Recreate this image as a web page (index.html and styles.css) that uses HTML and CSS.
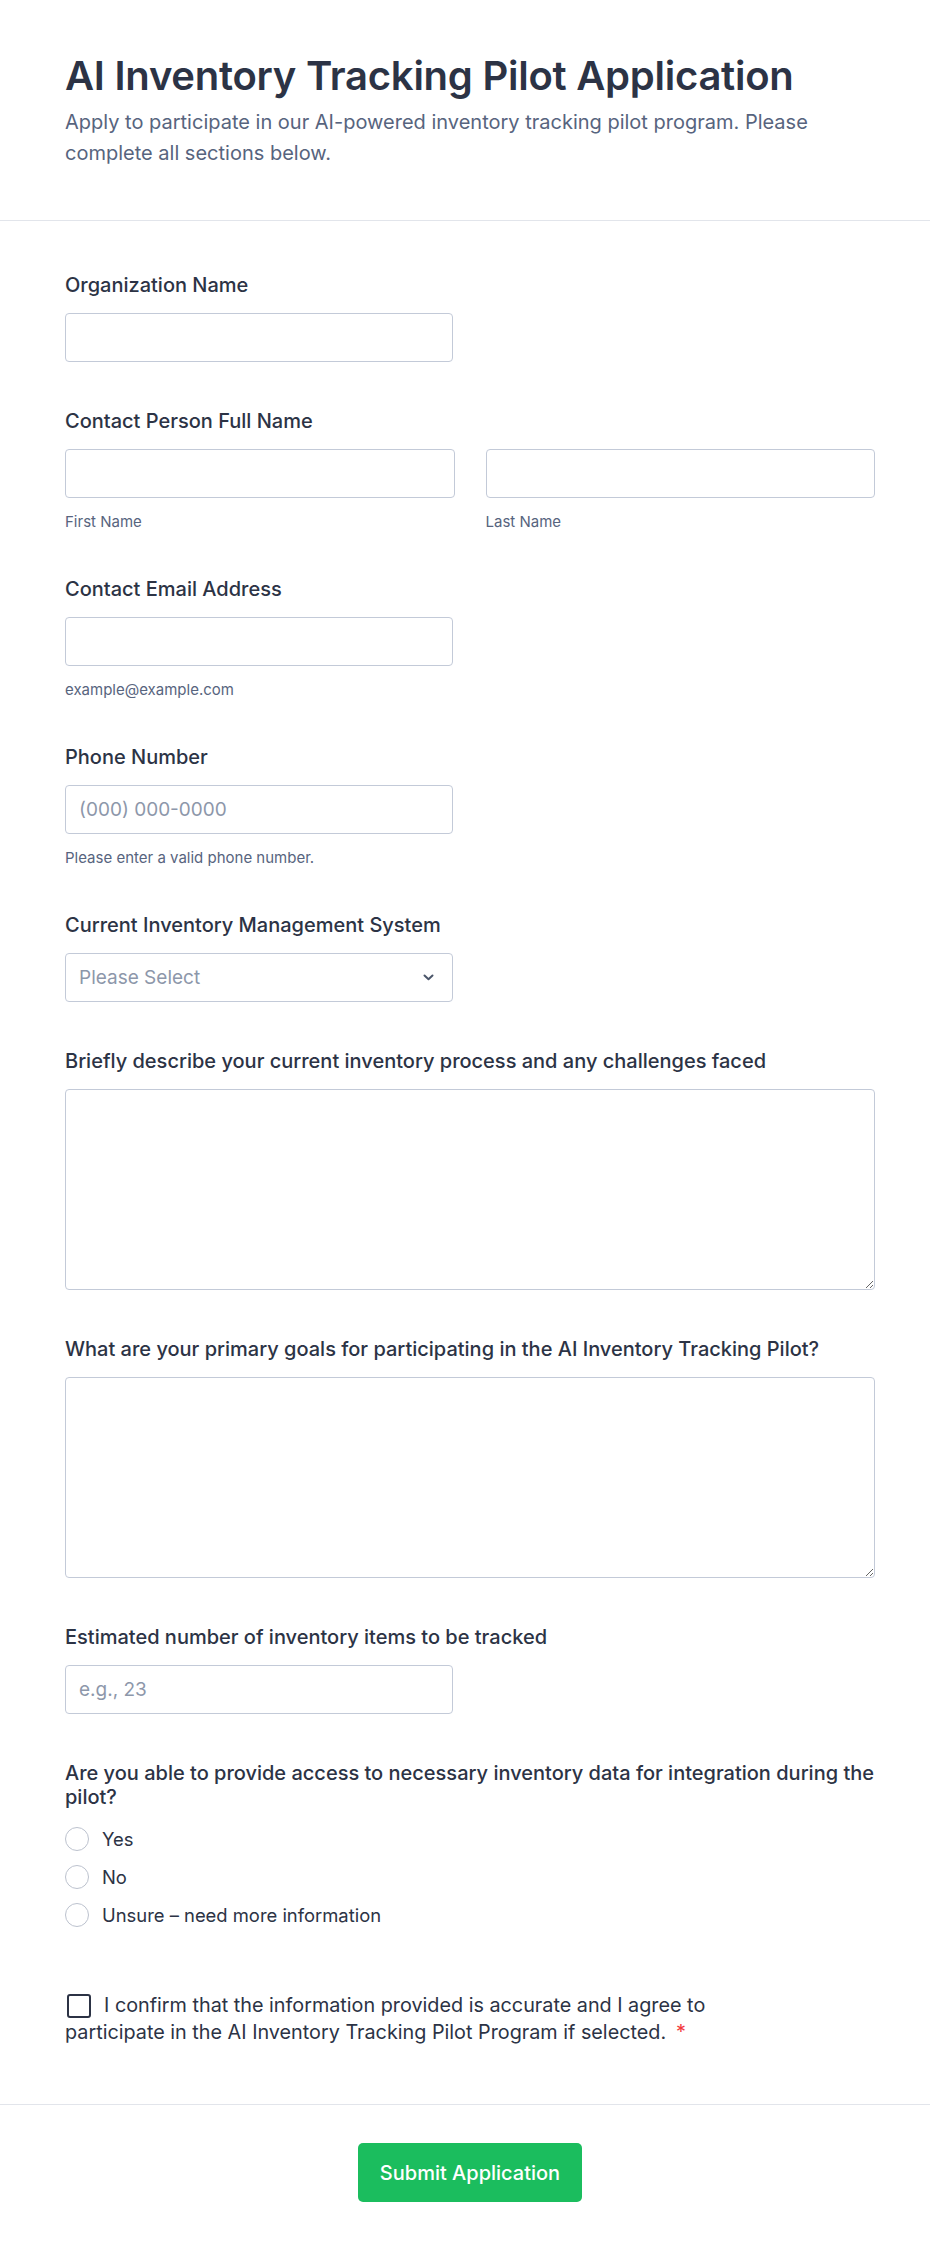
FILE: index.html
```html
<!DOCTYPE html>
<html lang="en">
<head>
<meta charset="utf-8">
<title>AI Inventory Tracking Pilot Application</title>
<link rel="stylesheet" href="styles.css">
</head>
<body>
<header class="form-header">
  <h1 class="title">AI Inventory Tracking Pilot Application</h1>
  <p class="subtitle">Apply to participate in our AI-powered inventory tracking pilot program. Please complete all sections below.</p>
</header>
<main class="form-body">
  <div class="field">
    <label class="label" for="org">Organization Name</label>
    <input class="input half" id="org" type="text">
  </div>
  <div class="field">
    <label class="label" for="first">Contact Person Full Name</label>
    <div class="name-row">
      <div class="name-col">
        <input class="input" id="first" type="text">
        <span class="sublabel">First Name</span>
      </div>
      <div class="name-col">
        <input class="input" id="last" type="text">
        <span class="sublabel">Last Name</span>
      </div>
    </div>
  </div>
  <div class="field">
    <label class="label" for="email">Contact Email Address</label>
    <input class="input half" id="email" type="email">
    <span class="sublabel">example@example.com</span>
  </div>
  <div class="field">
    <label class="label" for="phone">Phone Number</label>
    <input class="input half" id="phone" type="tel" placeholder="(000) 000-0000">
    <span class="sublabel">Please enter a valid phone number.</span>
  </div>
  <div class="field">
    <label class="label" for="system">Current Inventory Management System</label>
    <div class="select-wrap half">
      <select class="input select" id="system">
        <option value="">Please Select</option>
      </select>
      <svg class="chevron" width="11" height="7" viewBox="0 0 11 7" aria-hidden="true"><path d="M1.5 1.5 L5.5 5.2 L9.5 1.5" fill="none" stroke="#4a5569" stroke-width="2" stroke-linecap="round" stroke-linejoin="round"/></svg>
    </div>
  </div>
  <div class="field">
    <label class="label" for="process">Briefly describe your current inventory process and any challenges faced</label>
    <textarea class="input textarea" id="process"></textarea>
  </div>
  <div class="field">
    <label class="label" for="goals">What are your primary goals for participating in the AI Inventory Tracking Pilot?</label>
    <textarea class="input textarea" id="goals"></textarea>
  </div>
  <div class="field">
    <label class="label" for="items">Estimated number of inventory items to be tracked</label>
    <input class="input half" id="items" type="number" placeholder="e.g., 23">
  </div>
  <div class="field">
    <span class="label label-radio">Are you able to provide access to necessary inventory data for integration during the pilot?</span>
    <div class="options">
      <label class="option"><span class="radio"></span>Yes</label>
      <label class="option"><span class="radio"></span>No</label>
      <label class="option"><span class="radio"></span>Unsure – need more information</label>
    </div>
  </div>
  <div class="consent">
    <label class="consent-label"><span class="checkbox"></span><span>I confirm that the information provided is accurate and I agree to</span><br><span>participate in the AI Inventory Tracking Pilot Program if selected.</span><span class="required">*</span></label>
  </div>
</main>
<footer class="form-footer">
  <button class="submit" type="button">Submit Application</button>
</footer>
</body>
</html>
```
FILE: styles.css
```css
* { box-sizing: border-box; }

body {
  margin: 0;
  background: #ffffff;
  font-family: Inter, "Noto Sans", "Liberation Sans", sans-serif;
  color: #2c3345;
}

.form-header {
  padding: 52px 55px 51px 65px;
  border-bottom: 1px solid #e2e5eb;
}

.title {
  margin: 0;
  font-size: 40px;
  line-height: 48px;
  font-weight: 600;
  letter-spacing: -0.25px;
  color: #2c3345;
}

.subtitle {
  margin: 7px 0 0;
  font-size: 20px;
  line-height: 31px;
  color: #57647e;
}

.form-body {
  padding: 52px 55px 58px 65px;
}

.field {
  margin-bottom: 47px;
}

.label {
  display: block;
  font-size: 20px;
  line-height: 24px;
  font-weight: 500;
  color: #2c3345;
  margin-bottom: 16px;
}

.input {
  display: block;
  width: 100%;
  height: 49px;
  margin: 0;
  padding: 0 13px;
  border: 1px solid #c3cad8;
  border-radius: 4px;
  background: #ffffff;
  font-family: Inter, "Noto Sans", "Liberation Sans", sans-serif;
  font-size: 19px;
  color: #2c3345;
  outline: none;
}

.input::placeholder {
  color: #8d97aa;
}

.input[type=number] {
  -moz-appearance: textfield;
}
.input[type=number]::-webkit-inner-spin-button,
.input[type=number]::-webkit-outer-spin-button {
  -webkit-appearance: none;
  margin: 0;
}

.half {
  width: 388px;
}

.name-row {
  display: grid;
  grid-template-columns: 1fr 1fr;
  column-gap: 31px;
}

.sublabel {
  display: block;
  margin-top: 15px;
  font-size: 15px;
  line-height: 18px;
  color: #57647e;
}

.field:has(.sublabel) {
  margin-bottom: 46px;
}

.select-wrap {
  position: relative;
}

.select {
  appearance: none;
  -webkit-appearance: none;
  color: #8d97aa;
  cursor: pointer;
}

.chevron {
  position: absolute;
  right: 19px;
  top: 21px;
  pointer-events: none;
}

.textarea {
  height: 201px;
  padding: 12px 13px;
  resize: vertical;
}

.options {
  display: flex;
  flex-direction: column;
  gap: 14px;
  padding-top: 2px;
}

.option {
  display: flex;
  align-items: center;
  gap: 13px;
  height: 24px;
  font-size: 18.4px;
  line-height: 24px;
  color: #2c3345;
}

.radio {
  flex: none;
  width: 24px;
  height: 24px;
  border: 1.5px solid #bcc2ce;
  border-radius: 50%;
  background: #ffffff;
}

.consent {
  padding-top: 18px;
}

.consent-label {
  display: block;
  max-width: 700px;
  font-size: 19.8px;
  line-height: 27px;
  color: #2c3345;
}

.checkbox {
  display: inline-block;
  width: 24px;
  height: 24px;
  margin-left: 2px;
  margin-right: 13px;
  vertical-align: -6px;
  border: 2px solid #2c3345;
  border-radius: 3px;
  background: #ffffff;
}

.required {
  display: inline-block;
  color: #f23a3c;
  margin-left: 10px;
}

.form-footer {
  padding: 38px 55px 50px 65px;
  border-top: 1px solid #e2e5eb;
  text-align: center;
}

.submit {
  height: 59px;
  padding: 0 22px;
  border: none;
  border-radius: 5px;
  background: #1bbd5e;
  color: #ffffff;
  font-family: Inter, "Noto Sans", "Liberation Sans", sans-serif;
  font-size: 20px;
  font-weight: 500;
  cursor: pointer;
}
```
